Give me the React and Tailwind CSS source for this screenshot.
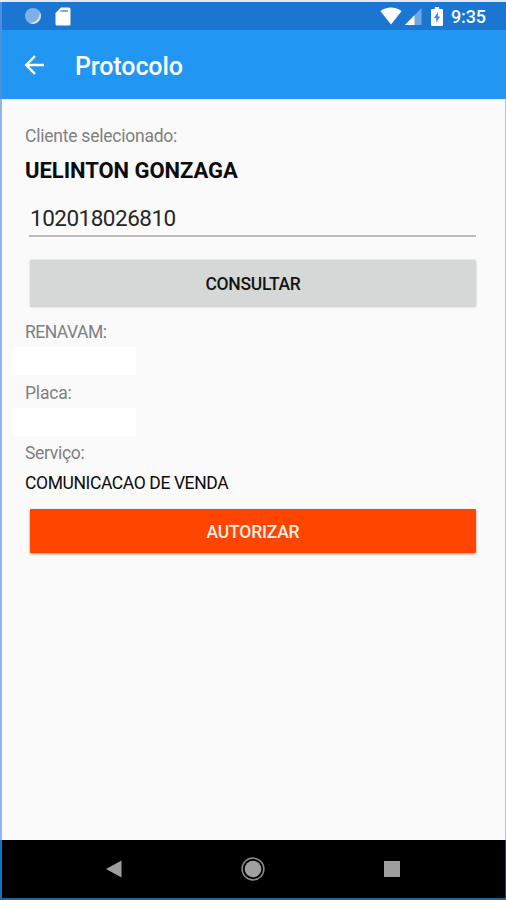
import React, { useState } from 'react';

const LABEL = "h-5 text-[17.5px] leading-5 text-[#808080]";

function StatusBar() {
  return (
    <div className="h-7 bg-[#1b76d2] flex items-center pl-[22px] pr-[20px]">
      <svg width="18" height="18" viewBox="0 0 18 18">
        <circle cx="9" cy="9" r="8" fill="#7fb0e8" />
        <path d="M15.5 4.5A8 8 0 0 1 5 15.8 9.5 9.5 0 0 0 15.5 4.5Z" fill="#d3e4f8" />
      </svg>
      <svg className="ml-[13px]" width="16" height="19" viewBox="0 0 16 19">
        <path d="M6 .5h8a1.5 1.5 0 0 1 1.5 1.5v15a1.5 1.5 0 0 1-1.5 1.5H2A1.5 1.5 0 0 1 .5 17V6Z" fill="#fff" />
        <path d="M5.5 4H13" stroke="#7fa9dc" strokeWidth="2" />
      </svg>

      <svg className="ml-auto" width="22" height="18" viewBox="0 0 22 18">
        <path d="M11 17.5.5 4.2C3.3 1.8 7 .5 11 .5s7.7 1.3 10.500 3.7Z" fill="#fff" />
      </svg>
      <svg className="ml-[3px]" width="17" height="17" viewBox="0 0 17 17">
        <path d="M16.5 0v17H0Z" fill="#6ea8e4" />
        <path d="M9.5 7.2V17H0Z" fill="#fff" />
      </svg>
      <svg className="ml-[9px]" width="12" height="19" viewBox="0 0 11 19" preserveAspectRatio="none">
        <path d="M3.5 0h4v2H10a1 1 0 0 1 1 1v15a1 1 0 0 1-1 1H1a1 1 0 0 1-1-1V3a1 1 0 0 1 1-1h2.5Z" fill="#fff" />
        <path d="M6.3 5 2.8 11h2v4.5L8.3 9.5h-2Z" fill="#3f86d6" />
      </svg>
      <span className="ml-[8px] pt-px text-[18px] leading-7 tracking-[-0.1px] font-medium text-white">9:35</span>
    </div>
  );
}

function AppBar() {
  return (
    <div className="h-[69px] bg-[#2196f3] flex items-center pl-[22px]">
      <svg width="21" height="20" viewBox="0 0 21 20" fill="none" stroke="#fff" strokeWidth="2.4">
        <path d="M20 10H2.5M11 1.2 2.2 10l8.800 8.800" />
      </svg>
      <h1 className="ml-[30px] pt-[5px] text-[25px] leading-8 tracking-[-0.1px] font-medium text-white">Protocolo</h1>
    </div>
  );
}

function NavBar() {
  return (
    <div className="h-[58px] bg-black flex items-center pl-[104px]">
      <svg width="16" height="18" viewBox="0 0 16 18">
        <path d="M15.5.5v17L0 9Z" fill="#9e9e9e" />
      </svg>
      <svg className="ml-[119px]" width="24" height="24" viewBox="0 0 24 24">
        <circle cx="12" cy="12" r="10.9" fill="none" stroke="#8a8a8a" strokeWidth="1.5" />
        <circle cx="12" cy="12" r="8.3" fill="#a0a0a0" />
      </svg>
      <div className="ml-[119px] size-4 bg-[#9e9e9e]" />
    </div>
  );
}

export default function App() {
  const [protocolo, setProtocolo] = useState('102018026810');

  return (
    <div className="h-[900px] w-[506px] flex flex-col overflow-hidden bg-[#1d66a8] font-['Roboto',sans-serif]">
      <div className="h-0.5 shrink-0 bg-[#dfe9f7]" />
      <div className="flex">
        <div className="w-0.5 bg-[#4a90e0]" />
        <div className="flex-1">
          <StatusBar />
          <AppBar />
        </div>
      </div>

      <main className="h-[741px] flex flex-col bg-[#fafafa] border-l-2 border-l-[#97b2e9] border-r border-r-[#adc8dc] pl-[23px] pr-[29px] pt-[27px]">
        <p className={`${LABEL} tracking-[-0.23px]`}>Cliente selecionado:</p>
        <p className="mt-[13px] h-6 text-[22px] leading-6 tracking-[-0.05px] font-bold text-[#0c0c0c]">UELINTON GONZAGA</p>
        <input
          type="text"
          value={protocolo}
          onChange={(e) => setProtocolo(e.target.value)}
          className="ml-1 mt-[23px] h-[31px] pl-px pb-[5px] border-b-2 border-[#bdbdbd] text-[22.5px] leading-6 tracking-[-0.5px] text-[#262626] outline-none"
        />
        <button className="ml-[5px] mt-[23px] h-[47px] shrink-0 rounded-[2px] bg-[#d6d8d7] shadow-[0_0_2px_rgba(0,0,0,0.25)] pt-px text-[17.5px] tracking-[-0.3px] font-medium text-[#141414]">
          CONSULTAR
        </button>

        <p className={`${LABEL} mt-[15px] tracking-[-0.5px]`}>RENAVAM:</p>
        <div className="-ml-3 mt-[5px] h-7 w-[123px] bg-white" />
        <p className={`${LABEL} mt-[8px] tracking-[-0.2px]`}>Placa:</p>
        <div className="-ml-3 mt-[5px] h-7 w-[123px] bg-white" />
        <p className={`${LABEL} mt-[7px] tracking-[-0.3px]`}>Serviço:</p>
        <p className="mt-[10px] h-5 text-[17.5px] leading-5 tracking-[-0.4px] text-[#0c0c0c]">COMUNICACAO DE VENDA</p>
        <button className="ml-[5px] mt-[16px] h-11 shrink-0 rounded-[1px] bg-[#ff4500] shadow-[0_1px_3px_rgba(0,0,0,0.4)] pt-[3px] text-[17.5px] tracking-[-0.2px] font-medium text-[#ffeee8]">
          AUTORIZAR
        </button>
      </main>

      <div className="shrink-0 border-l-2 border-l-[#1670bb] border-r border-r-[#124a7c]">
        <NavBar />
      </div>
    </div>
  );
}
